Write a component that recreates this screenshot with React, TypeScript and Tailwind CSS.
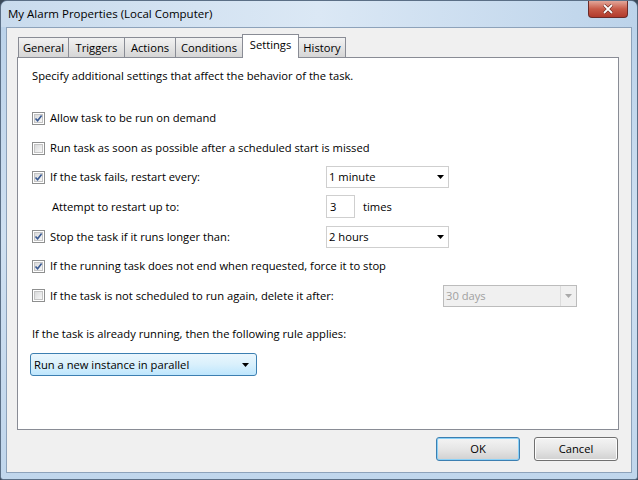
import React from "react";

const font = { fontFamily: '"Open Sans", "Noto Sans", sans-serif' };

function Check({ checked }: { checked: boolean }) {
  return (
    <div className="w-[13px] h-[13px] border border-[#8e8f8f] bg-white p-[1px] shrink-0">
      <div className="w-full h-full bg-gradient-to-br from-[#d9dadb] to-[#f7f7f7] border border-[#c4c4c4] relative">
        {checked && (
          <svg viewBox="0 0 9 9" className="absolute left-[-1px] top-[-1px] w-[9px] h-[9px]">
            <path d="M1.5 4.5 L3.6 6.8 L7.6 1.6" fill="none" stroke="#3a5a92" strokeWidth="1.6" />
          </svg>
        )}
      </div>
    </div>
  );
}

function Arrow({ color = "#000" }: { color?: string }) {
  return (
    <svg viewBox="0 0 7 4" className="w-[7px] h-[4px]">
      <path d="M0 0 H7 L3.5 4 Z" fill={color} />
    </svg>
  );
}

function Drop({ text, w, disabled }: { text: string; w: string; disabled?: boolean }) {
  return (
    <div
      className={`${w} h-[22px] border flex items-center justify-between pl-[2px] pr-[4px] ${
        disabled ? "border-[#bcbcbc] bg-[#f0f0f0] text-[#a0a0a0]" : "border-[#cfcfcf] bg-white text-black"
      }`}
    >
      <span>{text}</span>
      <div className={`flex items-center h-full pl-[4px] ${disabled ? "border-l border-[#dcdcdc]" : ""}`}>
        <Arrow color={disabled ? "#a9a9a9" : "#000"} />
      </div>
    </div>
  );
}

function Row({ h, children }: { h: string; children: React.ReactNode }) {
  return <div className={`${h} flex items-center`}>{children}</div>;
}

export default function App() {
  const tabs = [
    { t: "General", w: "w-[51px]" },
    { t: "Triggers", w: "w-[57px]" },
    { t: "Actions", w: "w-[52px]" },
    { t: "Conditions", w: "w-[68px]" },
  ];
  return (
    <div style={font} className="w-[638px] h-[480px] bg-[#3b4a5a] text-[11.2px] text-black leading-none">
      <div className="w-full h-full rounded-t-[7px] rounded-b-[3px] bg-gradient-to-b from-[#b9d1e9] via-[#cfe0f1] to-[#c0d6ec] border border-[#5b6f86] flex flex-col">
        {/* Title bar */}
        <div className="h-[26px] flex items-start justify-between bg-gradient-to-r from-[#c9dbed] via-[#dbe8f5] to-[#bcd3ea] rounded-t-[7px]">
          <div className="pl-[7px] pt-[7px] text-[11.5px] text-black">My Alarm Properties (Local Computer)</div>
          <div className="mr-[9px] w-[40px] h-[17px] rounded-b-[4px] border border-[#6a2a28] border-t-0 bg-gradient-to-b from-[#e2a69a] via-[#c75a48] to-[#b13a2c] flex items-center justify-center">
            <svg viewBox="0 0 12 10" className="w-[12px] h-[10px]">
              <path d="M2 1 L10 9 M10 1 L2 9" stroke="#5a1a14" strokeWidth="3" />
              <path d="M2 1 L10 9 M10 1 L2 9" stroke="#fff" strokeWidth="1.8" />
            </svg>
          </div>
        </div>
        {/* Client */}
        <div className="flex-1 mx-[5px] mb-[6px] border border-[#8da2ba] bg-[#f0f0f0] flex flex-col">
          <div className="px-[10px] pt-[5px] flex flex-col">
            {/* Tabs */}
            <div className="h-[24px] flex items-end pl-[1px]">
              {tabs.map((tb) => (
                <div
                  key={tb.t}
                  className={`${tb.w} h-[20px] border border-[#898c95] border-b-0 -mr-[1px] bg-gradient-to-b from-[#f2f2f2] to-[#d6d6d6] flex items-center justify-center`}
                >
                  {tb.t}
                </div>
              ))}
              <div className="w-[57px] h-[24px] border border-[#898c95] border-b-0 -mr-[1px] bg-white flex items-center justify-center relative z-10 mb-[-1px] pb-[3px]">
                Settings
              </div>
              <div className="w-[48px] h-[20px] border border-[#898c95] border-b-0 bg-gradient-to-b from-[#f2f2f2] to-[#d6d6d6] flex items-center justify-center">
                History
              </div>
            </div>
            {/* Panel */}
            <div className="h-[373px] w-[602px] border border-[#898c95] bg-white flex flex-col pl-[14px]">
              <Row h="h-[34px] pt-[1px]">Specify additional settings that affect the behavior of the task.</Row>
              <div className="h-[11px]" />
              <Row h="h-[30px]">
                <Check checked />
                <span className="ml-[5px]">Allow task to be run on demand</span>
              </Row>
              <Row h="h-[30px]">
                <Check checked={false} />
                <span className="ml-[5px]">Run task as soon as possible after a scheduled start is missed</span>
              </Row>
              <Row h="h-[28px]">
                <div className="w-[294px] flex items-center">
                  <Check checked />
                  <span className="ml-[5px]">If the task fails, restart every:</span>
                </div>
                <Drop text="1 minute" w="w-[123px]" />
              </Row>
              <Row h="h-[31px]">
                <div className="w-[294px] pl-[20px]">Attempt to restart up to:</div>
                <div className="w-[29px] h-[23px] border border-[#cfcfcf] bg-white flex items-center pl-[3px]">3</div>
                <span className="ml-[8px]">times</span>
              </Row>
              <Row h="h-[29px]">
                <div className="w-[294px] flex items-center">
                  <Check checked />
                  <span className="ml-[5px]">Stop the task if it runs longer than:</span>
                </div>
                <Drop text="2 hours" w="w-[123px]" />
              </Row>
              <Row h="h-[30px]">
                <Check checked />
                <span className="ml-[5px]">If the running task does not end when requested, force it to stop</span>
              </Row>
              <Row h="h-[29px]">
                <div className="w-[411px] flex items-center">
                  <Check checked={false} />
                  <span className="ml-[5px]">If the task is not scheduled to run again, delete it after:</span>
                </div>
                <Drop text="30 days" w="w-[134px]" disabled />
              </Row>
              <div className="h-[17px]" />
              <Row h="h-[14px]">If the task is already running, then the following rule applies:</Row>
              <div className="h-[12px]" />
              <div className="-ml-[2px] w-[227px] h-[23px] rounded-[3px] border border-[#3c7fb1] bg-gradient-to-b from-[#eaf6fd] via-[#d9f0fc] to-[#bee6fd] flex items-center justify-between pl-[3px] pr-[7px]">
                <span>Run a new instance in parallel</span>
                <Arrow />
              </div>
            </div>
          </div>
          {/* Buttons */}
          <div className="flex justify-end gap-[14px] pr-[13px] pt-[7px]">
            <div className="w-[84px] h-[24px] rounded-[3px] border border-[#3c7fb1] bg-gradient-to-b from-[#f4f4f4] via-[#e6e6e6] to-[#d0d0d0] shadow-[inset_0_0_0_1px_#8bd1f7] flex items-center justify-center">
              OK
            </div>
            <div className="w-[84px] h-[24px] rounded-[3px] border border-[#707070] bg-gradient-to-b from-[#f4f4f4] via-[#e6e6e6] to-[#d0d0d0] shadow-[inset_0_0_0_1px_#fcfcfc] flex items-center justify-center">
              Cancel
            </div>
          </div>
        </div>
      </div>
    </div>
  );
}
